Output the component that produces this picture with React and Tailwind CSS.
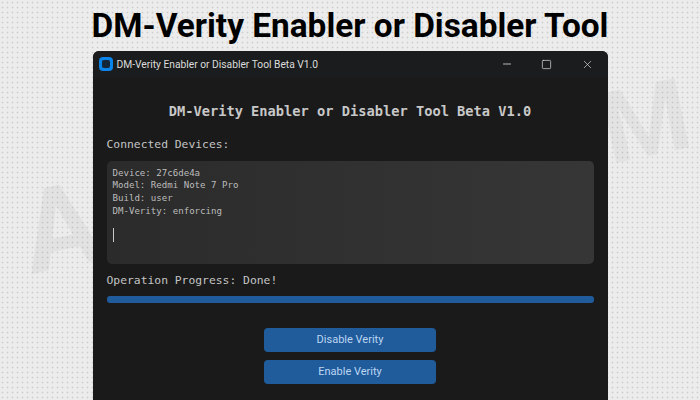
import { Minus, Square, X } from "lucide-react";

function TitleBar() {
  return (
    <div className="flex h-[27px] shrink-0 items-center pl-[6px] bg-[#1b1c1d]">
      <span className="flex h-[14px] w-[14px] items-center justify-center rounded-[4px] bg-[#0a84e8]">
        <span className="h-[8px] w-[8px] rounded-[2px] bg-[#14263a]" />
      </span>
      <span className="ml-[4px] pt-[1px] font-['Roboto',sans-serif] text-[10.25px] text-[#dcdcdc]">
        DM-Verity Enabler or Disabler Tool Beta V1.0
      </span>
      <div className="ml-auto flex items-center text-[#e2e2e2]">
        <Minus size={12} strokeWidth={1.6} className="mr-[28px]" />
        <Square size={11} strokeWidth={1.5} className="mr-[29px]" />
        <X size={13} strokeWidth={1.2} className="mr-[14px]" />
      </div>
    </div>
  );
}

function ActionButton({ children }) {
  return (
    <button className="h-[24px] w-[172px] rounded-[4px] bg-[#205b9b] pt-[1px] font-['Roboto',sans-serif] text-[11px] text-[#bcd6f2]">
      {children}
    </button>
  );
}

export default function App() {
  return (
    <div className="relative flex h-[400px] w-[700px] flex-col items-center overflow-hidden bg-[#ececec] bg-[radial-gradient(#cdcdcd_0.8px,transparent_1.1px)] bg-[length:5px_5px]">
      {/* faint watermark letters either side of the window */}
      <span className="absolute left-[22px] top-[170px] -rotate-[12deg] select-none font-['Roboto',sans-serif] text-[115px] font-bold leading-none text-black/[0.04]">
        A
      </span>
      <span className="absolute left-[602px] top-[72px] -rotate-[12deg] select-none font-['Roboto',sans-serif] text-[100px] font-bold leading-none text-black/[0.035]">
        M
      </span>

      <h1 className="relative mt-[6px] h-[46px] font-['Roboto',sans-serif] text-[33.4px] font-bold leading-[40px] text-black whitespace-nowrap">
        DM-Verity Enabler or Disabler Tool
      </h1>

      <div className="relative flex h-[360px] w-[515px] flex-col overflow-hidden rounded-t-[6px] bg-[#1a1a1a]">
        <TitleBar />

        <div className="flex flex-col px-[14px] font-['DejaVu_Sans_Mono',monospace]">
          <h2 className="mt-[24px] text-center text-[13.7px] font-bold leading-[18px] text-[#c8c8c8]">
            DM-Verity Enabler or Disabler Tool Beta V1.0
          </h2>

          <p className="mt-[16px] text-[11.35px] leading-[16px] text-[#c4c4c4]">Connected Devices:</p>

          <div className="mt-[9px] h-[103px] rounded-[5px] bg-gradient-to-r from-[#2b2b2b] to-[#363636] px-[6px] pt-[6px] text-[9.1px] leading-[12.7px] text-[#bcbcbc]">
            <div>Device: 27c6de4a</div>
            <div>Model: Redmi Note 7 Pro</div>
            <div>Build: user</div>
            <div>DM-Verity: enforcing</div>
            <div className="mt-[11px] h-[14px] w-px bg-[#c8c8c8]" />
          </div>

          <p className="mt-[8px] text-[11.35px] leading-[16px] text-[#c4c4c4]">Operation Progress: Done!</p>

          <div className="mt-[8px] h-[7px] rounded-[3px] bg-[#205b9b]" />

          <div className="mt-[25px] flex flex-col items-center gap-[8px]">
            <ActionButton>Disable Verity</ActionButton>
            <ActionButton>Enable Verity</ActionButton>
          </div>
        </div>
      </div>
    </div>
  );
}
